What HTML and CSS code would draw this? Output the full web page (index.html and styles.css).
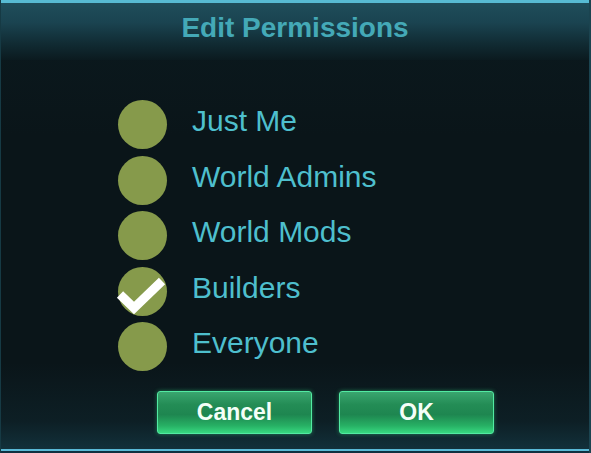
FILE: index.html
```html
<!DOCTYPE html>
<html lang="en">
<head>
    <meta charset="UTF-8">
    <meta name="viewport" content="width=device-width, initial-scale=1.0">
    <title>Edit Permissions</title>
    <link rel="stylesheet" href="styles.css">
</head>
<body>
    <div class="dialog">
        <div class="header">
            <h1>Edit Permissions</h1>
        </div>

        <ul class="options">
            <li class="option"><span class="dot"></span><span class="label">Just Me</span></li>
            <li class="option"><span class="dot"></span><span class="label">World Admins</span></li>
            <li class="option"><span class="dot"></span><span class="label">World Mods</span></li>
            <li class="option checked">
                <span class="dot">
                    <svg class="tick" width="54" height="54" viewBox="0 0 54 54">
                        <path d="M5 30.5 L19 44 L47 17" fill="none" stroke="#fff" stroke-width="9"/>
                    </svg>
                </span>
                <span class="label">Builders</span>
            </li>
            <li class="option"><span class="dot"></span><span class="label">Everyone</span></li>
        </ul>

        <div class="buttons">
            <button class="btn">Cancel</button>
            <button class="btn">OK</button>
        </div>

        <div class="footer"></div>
    </div>
</body>
</html>
```

FILE: styles.css
```css
body { margin: 0; background: #0a1418; font-family: "Liberation Sans", Arial, sans-serif; }
.dialog { width: 591px; height: 453px; display: flex; flex-direction: column; background: linear-gradient(to bottom, #0b1a1f 0%, #0a1519 30%, #0a1519 80%, #0d1f25 93%, #12303a 99%); border-left: 1px solid #163a44; border-right: 2px solid #1b4450; box-sizing: border-box; }
.header { height: 57px; border-top: 3px solid #57bbd3; background: linear-gradient(to bottom, #1f4e5b 0%, #1a4350 35%, #112c34 70%, #0b1a1f 100%); display: flex; justify-content: center; }
.header h1 { margin: 0; padding-top: 9px; font-size: 28px; line-height: 32px; font-weight: bold; color: #44a9b7; }
.options { list-style: none; margin: 37px 0 0; padding: 0 0 0 117px; }
.option { height: 55.5px; display: flex; align-items: center; gap: 25px; font-size: 30px; color: #4ebfcd; }
.label { padding-bottom: 7px; }
.dot { position: relative; width: 49px; height: 49px; border-radius: 50%; background: #869a4b; flex: none; }
.tick { position: absolute; left: -3px; top: -3px; filter: blur(0.4px); }
.buttons { display: flex; gap: 27px; padding-left: 156px; margin-top: 16px; }
.btn { width: 155px; height: 43px; border: 1px solid #52eaa2; border-radius: 3px; background: linear-gradient(to bottom, #3aa56f 0%, #248d56 30%, #1e8650 55%, #27b064 82%, #37d880 100%); box-shadow: 0 0 4px rgba(60, 230, 140, 0.45); color: #f4fff8; font-family: "Liberation Sans", Arial, sans-serif; font-size: 23px; font-weight: bold; padding: 0; }
.footer { margin-top: auto; height: 2px; border-bottom: 2px solid #103040; background: #5ab9d6; }
```
